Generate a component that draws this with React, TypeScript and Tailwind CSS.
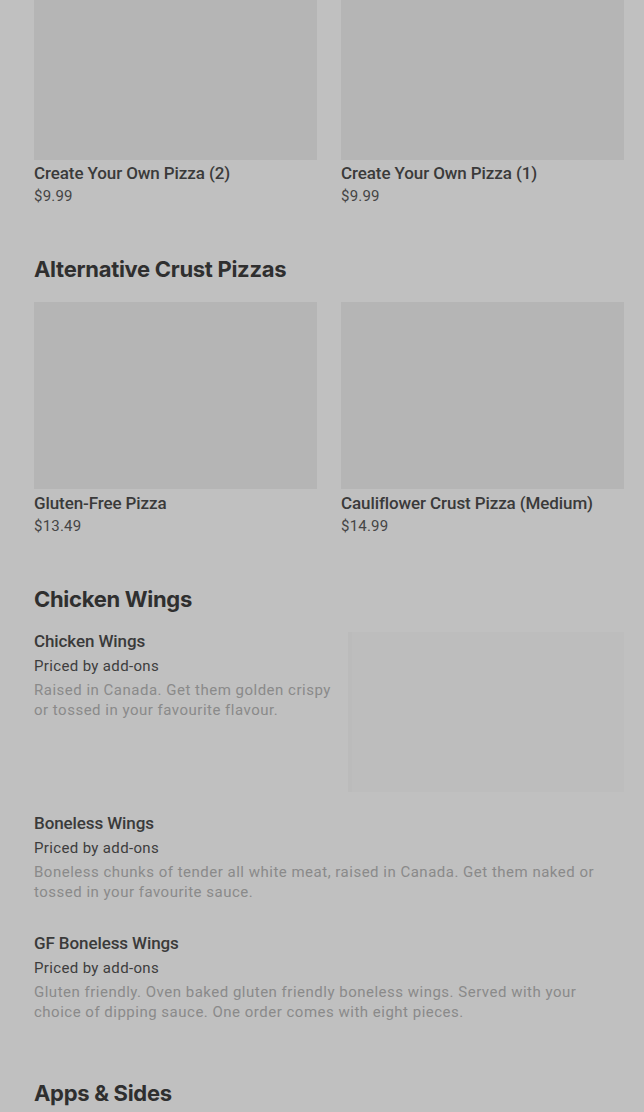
const font = { fontFamily: "Roboto, 'Liberation Sans', sans-serif" };

type Card = { name: string; price: string };
type Item = { name: string; desc: string; image?: boolean };

function CardGrid({ cards, imgH, gap }: { cards: Card[]; imgH: string; gap: string }) {
  return (
    <div className="grid grid-cols-2 gap-x-6">
      {cards.map((c) => (
        <div key={c.name}>
          <div className={`${imgH} bg-[#b5b5b5]`} />
          <div className={`${gap} text-[17px] leading-6 font-medium text-[#3a3a3a] tracking-[-0.1px]`}>{c.name}</div>
          <div className="mt-[1px] text-[15px] leading-5 text-[#454545] tracking-[0.2px]">{c.price}</div>
        </div>
      ))}
    </div>
  );
}

function Heading({ children, className = "" }: { children: string; className?: string }) {
  return (
    <h2
      className={`text-[22px] leading-7 font-bold tracking-[-0.3px] text-[#2f2f2f] ${className}`}
      style={{ fontFamily: "Inter, 'Liberation Sans', sans-serif" }}
    >
      {children}
    </h2>
  );
}

function MenuItem({ item, className = "" }: { item: Item; className?: string }) {
  return (
    <div className={`flex gap-4 ${className}`}>
      <div className="flex-1">
        <div className="text-[17px] leading-6 font-medium text-[#3a3a3a] tracking-[-0.1px]">{item.name}</div>
        <div className="mt-[3px] text-[15px] leading-5 text-[#3d3d3d] tracking-[0.35px]">Priced by add-ons</div>
        <p className="mt-1 text-[15px] leading-5 text-[#8a8a8a] tracking-[0.5px]">{item.desc}</p>
      </div>
      {item.image && <div className="mt-[3px] w-[276px] h-[160px] bg-[#bdbdbd] border-l-4 border-[#bbbbbb]" />}
    </div>
  );
}

export default function App() {
  return (
    <div className="min-h-[1112px] bg-[#c0c0c0] pl-[34px] pr-5 overflow-hidden" style={font}>
      <CardGrid
        imgH="h-[160px]"
        gap="mt-[1px]"
        cards={[
          { name: "Create Your Own Pizza (2)", price: "$9.99" },
          { name: "Create Your Own Pizza (1)", price: "$9.99" },
        ]}
      />

      <Heading className="mt-[49px] mb-[19px]">Alternative Crust Pizzas</Heading>
      <CardGrid
        imgH="h-[187px]"
        gap="mt-[2px]"
        cards={[
          { name: "Gluten-Free Pizza", price: "$13.49" },
          { name: "Cauliflower Crust Pizza (Medium)", price: "$14.99" },
        ]}
      />

      <Heading className="mt-[49px]">Chicken Wings</Heading>
      <MenuItem
        className="mt-4"
        item={{ name: "Chicken Wings", desc: "Raised in Canada. Get them golden crispy or tossed in your favourite flavour.", image: true }}
      />
      <MenuItem
        className="mt-[19px]"
        item={{
          name: "Boneless Wings",
          desc: "Boneless chunks of tender all white meat, raised in Canada. Get them naked or tossed in your favourite sauce.",
        }}
      />
      <MenuItem
        className="mt-[29px]"
        item={{
          name: "GF Boneless Wings",
          desc: "Gluten friendly. Oven baked gluten friendly boneless wings. Served with your choice of dipping sauce. One order comes with eight pieces.",
        }}
      />

      <Heading className="mt-[57px]">Apps & Sides</Heading>
    </div>
  );
}
